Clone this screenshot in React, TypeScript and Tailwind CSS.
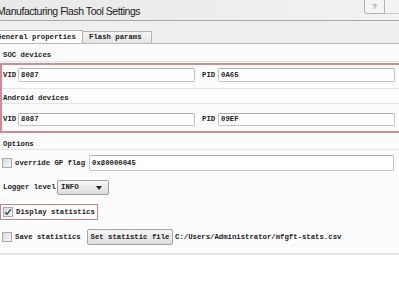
import React from "react";

const mono = { fontFamily: '"Liberation Mono", "Courier New", monospace' } as React.CSSProperties;

function Input({ w, value }: { w: string; value?: string }) {
  return (
    <div
      className={`${w} h-full border border-[#c4c4c4] border-t-[#b0b0b0] bg-white rounded-[2px] flex items-center pl-[2px] text-[7.3px] text-[#222] font-bold whitespace-nowrap overflow-hidden`}
    >
      {value}
    </div>
  );
}

function Check({ checked }: { checked?: boolean }) {
  return (
    <div className="w-[10px] h-[10px] border border-[#a9a9a9] bg-gradient-to-br from-[#dcdcdc] to-[#f8f8f8] flex items-center justify-center shrink-0">
      {checked && (
        <svg width="8" height="8" viewBox="0 0 8 8">
          <path d="M1.2 4.2 L3 6.2 L6.8 1.4" fill="none" stroke="#2a3a6a" strokeWidth="1.3" />
        </svg>
      )}
    </div>
  );
}

export default function App() {
  return (
    <div className="w-[399px] h-[300px] bg-white overflow-hidden flex flex-col">
      {/* title bar */}
      <div className="h-[20px] bg-gradient-to-r from-[#e9e9e9] to-[#f2f2f2] flex justify-between items-start">
        <div
          className="ml-[-3px] mt-[4px] text-[10.5px] tracking-[-0.45px] leading-[14px] text-[#1b1b1b] whitespace-nowrap"
          style={{ fontFamily: '"Liberation Sans", Arial, sans-serif' }}
        >
          Manufacturing Flash Tool Settings
        </div>
        <div className="flex">
          <div className="w-[21px] h-[14px] border border-t-0 border-[#b2b2b2] rounded-bl-[3px] bg-[#f5f5f5] flex items-center justify-center text-[8px] leading-[8px] text-[#666]" style={{ fontFamily: '"Liberation Sans", sans-serif' }}>
            ?
          </div>
          <div className="w-[14px] h-[14px] border-b border-[#c8c8c8] bg-[#f3f3f3]" />
        </div>
      </div>
      <div className="h-px bg-[#a8a8a8]" />
      {/* tab strip */}
      <div className="h-[23px] bg-[#efefef] flex items-end border-b border-[#b9b9b9] overflow-hidden" style={mono}>
        <div className="ml-[-8px] h-[14px] w-[91px] shrink-0 bg-white border border-b-0 border-[#b4b4b4] flex items-center pl-[4px] text-[7.3px] font-bold text-[#222] whitespace-nowrap translate-y-px">
          General properties
        </div>
        <div className="h-[12px] w-[69px] shrink-0 bg-gradient-to-b from-[#f4f4f4] to-[#e4e4e4] border border-b-0 border-l-0 border-[#b4b4b4] flex items-center pl-[6px] text-[7.3px] font-bold text-[#222] whitespace-nowrap">
          Flash params
        </div>
      </div>
      {/* content */}
      <div className="bg-[#fcfcfc] flex flex-col items-start text-[7.3px] font-bold text-[#222] overflow-hidden" style={mono}>
        <div className="h-[17px] flex items-end pl-[3px] leading-[9px] pb-[1px]">SOC devices</div>
        <div className="h-px w-full bg-[#e2e2e2]" />
        <div className="mt-[1px] w-[410px] shrink-0 border-2 border-[#d48a92] flex flex-col">
          <div className="mt-[3px] h-[14px] flex items-center">
            <div className="w-[16px] pl-[1px] leading-[9px]">VID</div>
            <Input w="w-[177px]" value="8087" />
            <div className="w-[7px]" />
            <div className="w-[16px] leading-[9px]">PID</div>
            <Input w="w-[177px]" value="0A65" />
          </div>
          <div className="mt-[6px] h-px bg-[#e4e4e4]" />
          <div className="mt-[5px] h-[9px] pl-[1px] leading-[9px]">Android devices</div>
          <div className="h-px bg-[#e4e4e4]" />
          <div className="mt-[9px] h-[13px] flex items-center">
            <div className="w-[16px] pl-[1px] leading-[9px]">VID</div>
            <Input w="w-[177px]" value="8087" />
            <div className="w-[7px]" />
            <div className="w-[16px] leading-[9px]">PID</div>
            <Input w="w-[177px]" value="09EF" />
          </div>
          <div className="h-[5px]" />
        </div>
        <div className="mt-[7px] h-[9px] pl-[3px] leading-[9px]">Options</div>
        <div className="h-px w-full bg-[#e4e4e4]" />
        <div className="mt-[5px] h-[16px] flex items-center">
          <div className="ml-[2px]">
            <Check />
          </div>
          <div className="ml-[3px] w-[74px] leading-[9px] whitespace-nowrap">override GP flag</div>
          <Input w="w-[305px]" value="0x80000045" />
        </div>
        <div className="mt-[9px] h-[15px] flex items-center">
          <div className="ml-[3px] w-[54px] leading-[9px] whitespace-nowrap">Logger level</div>
          <div className="w-[52px] h-full border border-[#9e9e9e] bg-gradient-to-b from-[#f6f6f6] to-[#dedede] rounded-[2px] flex items-center justify-between pl-[3px] pr-[6px]">
            <span>INFO</span>
            <svg width="6" height="4" viewBox="0 0 6 4">
              <path d="M0 0 H6 L3 4 Z" fill="#222" />
            </svg>
          </div>
        </div>
        <div className="mt-[9px] h-[16px] w-[98px] border border-[#d0808a] flex items-center">
          <div className="ml-[2px]">
            <Check checked />
          </div>
          <div className="ml-[3px] leading-[9px] whitespace-nowrap">Display statistics</div>
        </div>
        <div className="mt-[9px] h-[16px] flex items-center">
          <div className="ml-[2px]">
            <Check />
          </div>
          <div className="ml-[3px] w-[72px] leading-[9px] whitespace-nowrap">Save statistics</div>
          <div className="w-[86px] h-full border border-[#a4a4a4] rounded-[2px] bg-gradient-to-b from-[#f6f6f6] to-[#dcdcdc] flex items-center justify-center whitespace-nowrap">
            Set statistic file
          </div>
          <div className="ml-[2px] leading-[9px] whitespace-nowrap">C:/Users/Administrator/mfgft-stats.csv</div>
        </div>
        <div className="h-[8px]" />
      </div>
      <div className="h-[2px] bg-gradient-to-b from-[#dcdcdc] to-[#f2f2f2]" />
      <div className="flex-1 bg-white" />
    </div>
  );
}
